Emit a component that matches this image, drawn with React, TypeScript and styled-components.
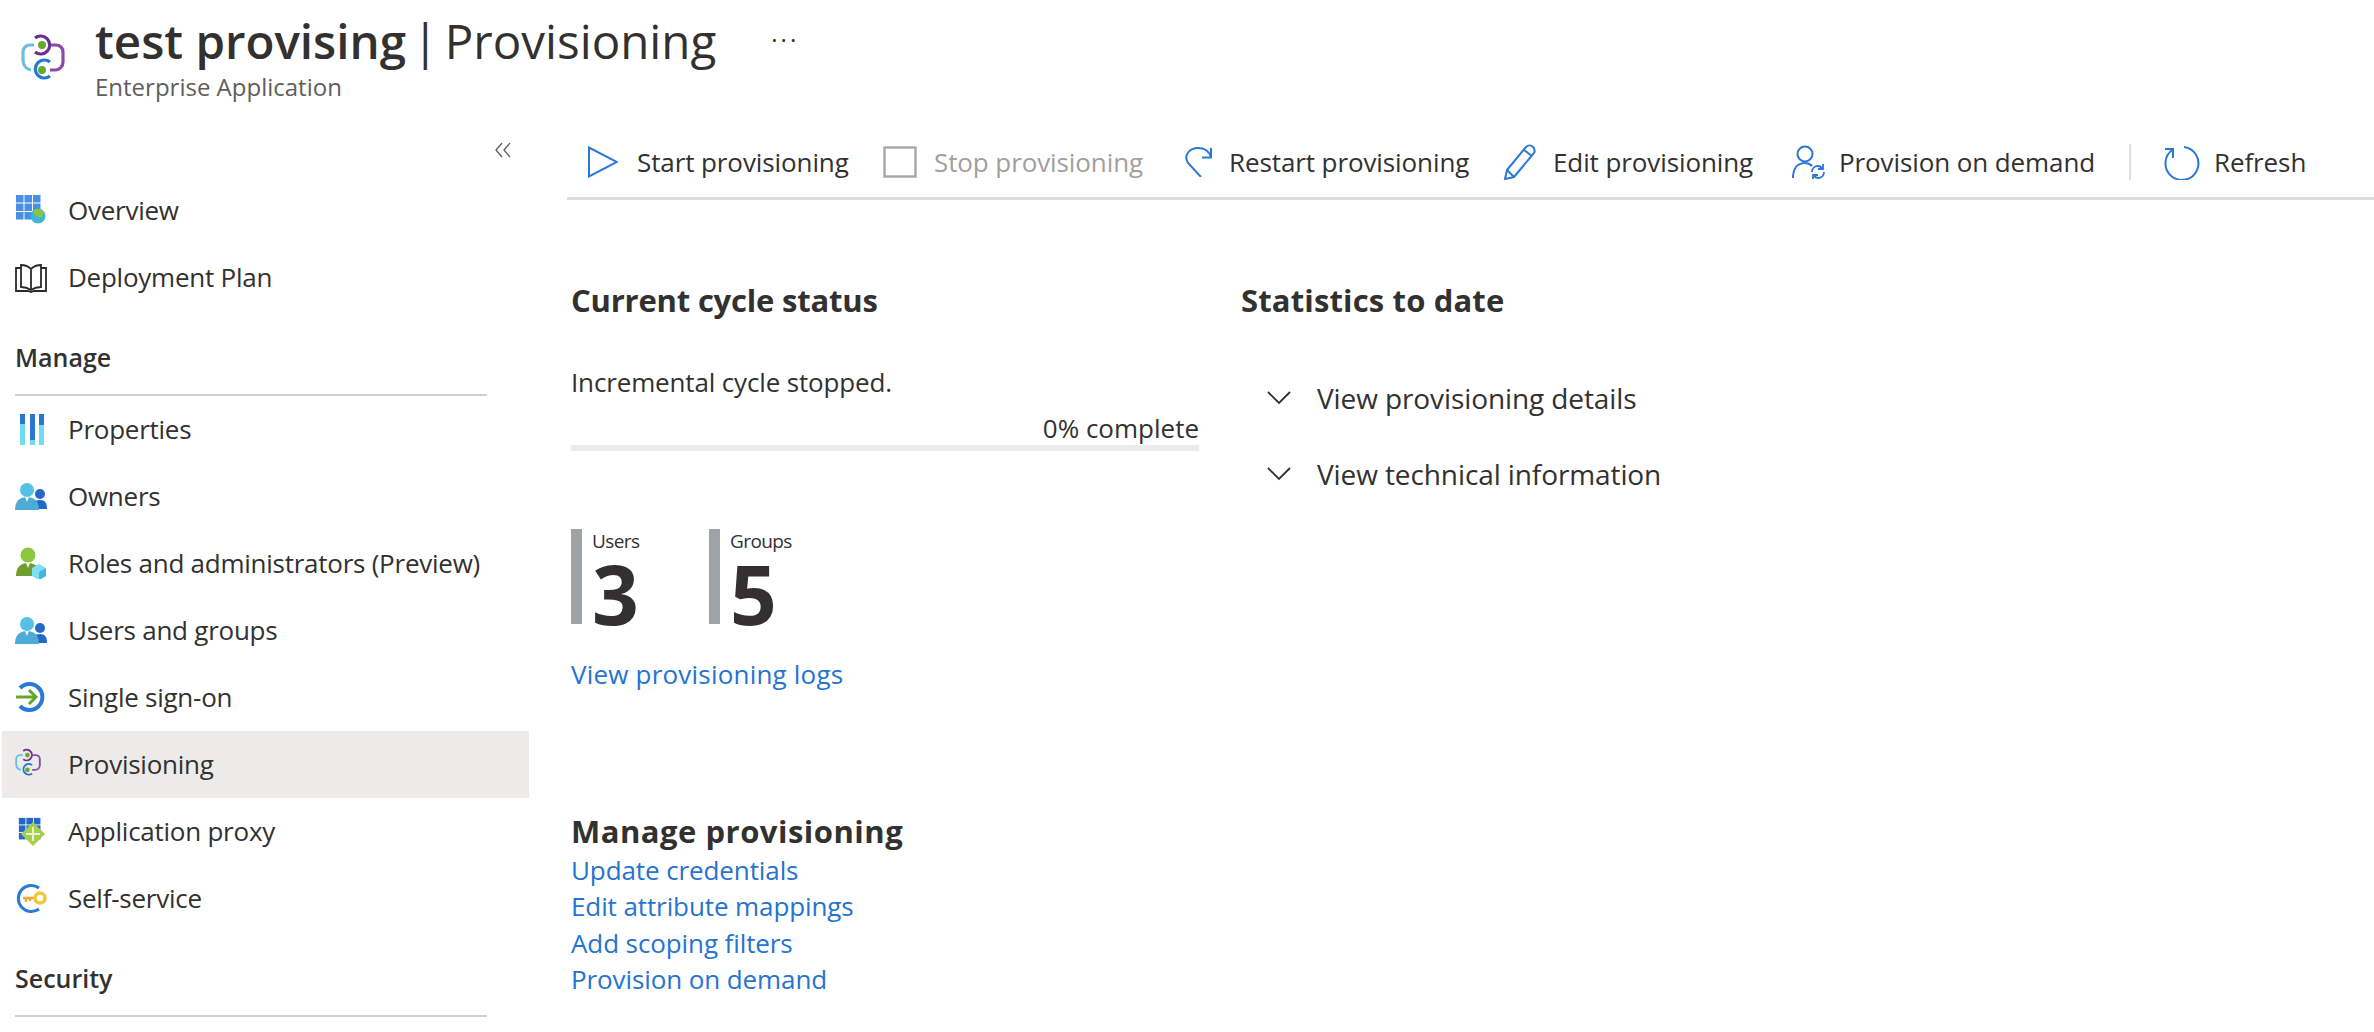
import React from "react";
import styled, { createGlobalStyle } from "styled-components";

const GlobalStyle = createGlobalStyle`
  html, body {
    margin: 0;
    padding: 0;
    background: #fff;
    overflow: hidden;
  }
  body {
    font-family: "Open Sans", "Noto Sans", "Liberation Sans", sans-serif;
    color: #323130;
  }
`;

const Page = styled.div`
  width: 2374px;
  height: 1032px;
  overflow: hidden;
  display: flex;
  flex-direction: column;
`;

const Header = styled.header`
  display: flex;
  height: 130px;
  flex: none;
  padding-left: 21px;
`;

const LogoSlot = styled.div`
  width: 74px;
  padding-top: 33px;
  flex: none;
`;

const TitleBlock = styled.div`
  padding-top: 9px;
`;

const Title = styled.h1`
  margin: 0;
  font-size: 47.5px;
  line-height: 64px;
  font-weight: 400;
  white-space: nowrap;
  word-spacing: -6px;
  > b {
    font-weight: 600;
    word-spacing: 0;
  }
`;

const SubTitle = styled.div`
  font-size: 24px;
  line-height: 32px;
  margin-top: -2px;
  color: #605e5c;
`;

const MoreDots = styled.div`
  margin: 28px 0 0 55px;
  font-size: 24px;
  line-height: 24px;
  letter-spacing: 3px;
`;

const Body = styled.div`
  display: flex;
  flex: 1;
  min-height: 0;
`;

const Sidebar = styled.nav`
  width: 527px;
  margin-left: 2px;
  flex: none;
`;

const CollapseRow = styled.div`
  height: 47px;
  display: flex;
  justify-content: flex-end;
  padding-right: 18px;
  box-sizing: border-box;
  padding-top: 12px;
`;

const NavRow = styled.div<{ $active?: boolean }>`
  height: 67px;
  box-sizing: border-box;
  display: flex;
  align-items: center;
  padding: 0 0 2px 13px;
  gap: 21px;
  font-size: 26px;
  letter-spacing: -0.25px;
  background: ${(p) => (p.$active ? "#edebe9" : "transparent")};
`;

const NavIcon = styled.span`
  width: 32px;
  height: 32px;
  flex: none;
  display: flex;
`;

const SectionTitle = styled.div`
  margin: 0 42px 0 13px;
  height: 85px;
  box-sizing: border-box;
  display: flex;
  align-items: flex-end;
  padding-bottom: 20px;
  font-size: 25px;
  font-weight: 600;
  border-bottom: 2px solid #cfcfcf;
`;

const Main = styled.main`
  flex: 1;
  margin-left: 38px;
  min-width: 0;
`;

const Toolbar = styled.div`
  height: 70px;
  box-sizing: border-box;
  display: flex;
  align-items: center;
  padding: 0 0 4px 19px;
  border-bottom: 3px solid #dcdcdc;
`;

const ToolItem = styled.div<{ $width: number; $muted?: boolean }>`
  width: ${(p) => p.$width}px;
  flex: none;
  display: flex;
  align-items: center;
  font-size: 26px;
  letter-spacing: -0.1px;
  white-space: nowrap;
  color: ${(p) => (p.$muted ? "#a19f9d" : "#323130")};
`;

const ToolIcon = styled.span<{ $slot: number }>`
  width: ${(p) => p.$slot}px;
  flex: none;
  display: flex;
`;

const ToolSeparator = styled.div`
  width: 2px;
  height: 36px;
  margin-right: 33px;
  background: #dedede;
  flex: none;
`;

const Columns = styled.div`
  display: flex;
  padding-left: 4px;
`;

const StatusColumn = styled.section`
  width: 628px;
  margin-right: 42px;
  flex: none;
`;

const Heading = styled.h2`
  margin: 0;
  font-size: 31px;
  line-height: 40px;
  font-weight: 700;
  letter-spacing: -0.2px;
  padding-top: 80px;
`;

const StatsHeading = styled(Heading)`
  letter-spacing: 0.15px;
`;

const BodyText = styled.div`
  margin-top: 44px;
  font-size: 26px;
  line-height: 36px;
  letter-spacing: -0.15px;
`;

const ProgressLabel = styled.div`
  margin-top: 12px;
  text-align: right;
  font-size: 26px;
  line-height: 32px;
`;

const ProgressTrack = styled.div`
  height: 6px;
  margin-top: 1px;
  background: #edebe9;
`;

const Counters = styled.div`
  display: flex;
  margin-top: 78px;
`;

const Counter = styled.div`
  width: 138px;
  height: 95px;
  box-sizing: border-box;
  border-left: 11px solid #a0a3a6;
  padding-left: 10px;
  flex: none;
`;

const CounterLabel = styled.div`
  font-size: 19px;
  line-height: 24px;
  letter-spacing: -0.6px;
`;

const CounterValue = styled.div`
  font-size: 82px;
  line-height: 76px;
  font-weight: 700;
  margin-top: 2px;
  letter-spacing: -2px;
`;

const TextLink = styled.a`
  display: block;
  font-size: 26px;
  line-height: 36.6px;
  letter-spacing: -0.1px;
  color: #2673d0;
`;

const LogsLink = styled(TextLink)`
  margin-top: 32px;
  letter-spacing: 0.2px;
`;

const ManageHeading = styled.h2`
  margin: 118px 0 0;
  font-size: 31px;
  line-height: 40px;
  font-weight: 700;
  letter-spacing: 0.5px;
`;

const LinkList = styled.div`
  margin-top: 1px;
`;

const StatsColumn = styled.section`
  flex: 1;
`;

const Expander = styled.div`
  display: flex;
  align-items: center;
  height: 76px;
  padding-left: 26px;
  gap: 26px;
  font-size: 28px;
  letter-spacing: -0.1px;
`;

const ExpanderList = styled.div`
  margin-top: 40px;
`;

const blue = "#2b78d6";

const Stroke = ({ size, children, w = 2, h }: any) => (
  <svg width={size} height={h ?? size} viewBox={`0 0 ${size} ${h ?? size}`} fill="none" stroke={blue} strokeWidth={w}>
    {children}
  </svg>
);

const PlayIcon = () => (
  <Stroke size={32}>
    <path d="M3 1.500v29L31 16z" />
  </Stroke>
);

const StopIcon = () => (
  <svg width="34" height="32" viewBox="0 0 34 32" fill="none" stroke="#a6a6a6" strokeWidth="2.400">
    <rect x="1.500" y="1.500" width="31" height="29" />
  </svg>
);

const RestartIcon = () => (
  <Stroke size={30}>
    <path d="M17 30 4 16C-1 8 6 1 14 1c6 0 11 3 13 9" />
    <path d="M27 1v9.500h-9" />
  </Stroke>
);

const EditIcon = () => (
  <Stroke size={36}>
    <path d="M6 26 25 3c2-2 5-2 7 0s2 4 1 6L13 33l-9 2z" />
    <path d="m6 26 7 7M23 6l8 6" />
  </Stroke>
);

const DemandIcon = () => (
  <Stroke size={34}>
    <circle cx="13" cy="9" r="7.500" />
    <path d="M1 33c0-9 4-15 12-15 3 0 5 1 7 3" />
    <path d="M20 27c0-4 3-6 6-6 2 0 3 1 4 2M32 27c0 4-3 6-6 6-2 0-3-1-4-2" strokeWidth="1.800" />
    <path d="M31 19v5h-5M21 35v-5h5" strokeWidth="1.800" />
  </Stroke>
);

const RefreshIcon = () => (
  <Stroke size={36}>
    <path d="M9 5.500a16.500 16.500 0 1 0 11-2.500" />
    <path d="M9 14V5H1" />
  </Stroke>
);

const AppLogo = ({ size = 44 }: { size?: number }) => (
  <svg width={size} height={(size * 48) / 44} viewBox="0 0 44 48" fill="none" strokeWidth="3.200">
    <path d="M14 5a9 9 0 1 1 0 14" stroke="#6b2e91" />
    <path d="M30 12h5c4 0 7 3 7 7v10c0 4-3 8-8 8h-5" stroke="#8a4aa8" />
    <path d="M13 12H9c-4 0-7 3-7 7v8c0 5 3 9 8 10" stroke="#6ebde4" />
    <path d="M29 29a9 9 0 1 0 0 14" stroke="#2378cf" />
    <circle cx="21" cy="12" r="4" fill="#67a92f" />
    <circle cx="21" cy="37" r="4" fill="#67a92f" />
  </svg>
);

const Grid = ({ color }: { color: string }) => (
  <g fill={color}>
    {[0, 1, 2].map((r) =>
      [0, 1, 2].map((c) => (
        <rect key={`${r}${c}`} x={1 + c * 8.5} y={1 + r * 8.5} width="7.500" height="7.500" />
      )),
    )}
  </g>
);

const OverviewIcon = () => (
  <svg width="32" height="32" viewBox="0 0 32 32">
    <Grid color="#4a90e2" />
    <circle cx="23" cy="22" r="7.500" fill="#3fb4d8" />
    <path d="M19 16c4-2 8-1 10 3l-3 5-4-2-3-2z" fill="#8cc63f" />
  </svg>
);

const BookIcon = () => (
  <svg width="32" height="32" viewBox="0 0 32 32" fill="none" stroke="#2b2b2b" strokeWidth="1.800">
    <path d="M16 8C13 5 9 4 6 4v22c4 0 7 1 10 3 3-2 6-3 10-3V4c-3 0-7 1-10 4zM16 8v21" />
    <path d="M6 7H1v23h12l3 1 3-1h12V7h-5" />
  </svg>
);

const PropertiesIcon = () => (
  <svg width="32" height="32" viewBox="0 0 32 32">
    <path d="M5 1h5v32H5zM15 1h5v32h-5zM24 1h5v32h-5z" fill="#6fdcf5" />
    <path d="M5 1h5v10H5zM15 1h5v26h-5zM24 1h5v11h-5z" fill="#2a77d1" />
  </svg>
);

const PeopleIcon = () => (
  <svg width="32" height="32" viewBox="0 0 32 30">
    <circle cx="25" cy="13" r="5" fill="#2468c9" />
    <path d="M16 28c0-6 4-9 9-9s7 3 7 9z" fill="#2468c9" />
    <circle cx="12" cy="9" r="7" fill="#55c1e6" />
    <path d="M0 29c0-8 4-13 12-13s12 5 12 13z" fill="#4eaad6" />
    <path d="m10 16 2 5 2-5z" fill="#fff" />
  </svg>
);

const RolesIcon = () => (
  <svg width="32" height="32" viewBox="0 0 32 32">
    <circle cx="13" cy="8" r="7.500" fill="#8cc63f" />
    <path d="M1 29c0-8 4-13 12-13s12 5 12 13z" fill="#6e9e2d" />
    <path d="m11 16 2 5 2-5z" fill="#fff" />
    <path d="m24 17 7 4v8l-7 4-7-4v-8z" fill="#7fe0f5" />
    <path d="m24 25 7-4v8l-7 4z" fill="#43b6e2" />
  </svg>
);

const SsoIcon = () => (
  <svg width="32" height="32" viewBox="0 0 32 32" fill="none">
    <path d="M5 7a13 13 0 1 1 0 18" stroke="#2b78d6" strokeWidth="4" />
    <path d="M1 16h19M14 9l7 7-7 7" stroke="#62a72d" strokeWidth="3" />
  </svg>
);

const ProxyIcon = () => (
  <svg width="32" height="32" viewBox="0 0 32 32">
    <g transform="translate(3 2) scale(.88)">
      <Grid color="#2468c9" />
    </g>
    <path d="M18 7l12 12-12 12L6 19z" fill="#a4cf4e" />
    <path d="M18 12v14M11 19h14" stroke="#e8f3cf" strokeWidth="2" />
  </svg>
);

const SelfServiceIcon = () => (
  <svg width="32" height="32" viewBox="0 0 32 32" fill="none">
    <path d="M24 6a13 13 0 1 0 0 21" stroke="#2b78d6" strokeWidth="3" />
    <path d="M8 16h13M11 16v4M15 16v3" stroke="#f2a93b" strokeWidth="2.500" />
    <circle cx="25" cy="16" r="5" stroke="#f5c437" strokeWidth="3.500" />
  </svg>
);

const CollapseIcon = () => (
  <svg width="16" height="16" viewBox="0 0 16 16" fill="none" stroke="#605e5c" strokeWidth="1.300">
    <path d="M7 1 1 8l6 7M15 1 9 8l6 7" />
  </svg>
);

const Chevron = () => (
  <svg width="24" height="14" viewBox="0 0 24 14" fill="none" stroke="#323130" strokeWidth="1.800">
    <path d="m1 1 11 11L23 1" />
  </svg>
);

const navTop = [
  { label: "Overview", icon: <OverviewIcon /> },
  { label: "Deployment Plan", icon: <BookIcon /> },
];

const navManage = [
  { label: "Properties", icon: <PropertiesIcon /> },
  { label: "Owners", icon: <PeopleIcon /> },
  { label: "Roles and administrators (Preview)", icon: <RolesIcon /> },
  { label: "Users and groups", icon: <PeopleIcon /> },
  { label: "Single sign-on", icon: <SsoIcon /> },
  { label: "Provisioning", icon: <AppLogo size={26} />, active: true },
  { label: "Application proxy", icon: <ProxyIcon /> },
  { label: "Self-service", icon: <SelfServiceIcon /> },
];

const NavItem = ({ item }: any) => (
  <NavRow $active={item.active}>
    <NavIcon>{item.icon}</NavIcon>
    {item.label}
  </NavRow>
);

export default function App() {
  return (
    <Page>
      <GlobalStyle />
      <Header>
        <LogoSlot>
          <AppLogo />
        </LogoSlot>
        <TitleBlock>
          <Title>
            <b>test provising</b> | Provisioning
          </Title>
          <SubTitle>Enterprise Application</SubTitle>
        </TitleBlock>
        <MoreDots>···</MoreDots>
      </Header>
      <Body>
        <Sidebar>
          <CollapseRow>
            <CollapseIcon />
          </CollapseRow>
          {navTop.map((item) => (
            <NavItem key={item.label} item={item} />
          ))}
          <SectionTitle>Manage</SectionTitle>
          {navManage.map((item) => (
            <NavItem key={item.label} item={item} />
          ))}
          <SectionTitle>Security</SectionTitle>
        </Sidebar>
        <Main>
          <Toolbar>
            <ToolItem $width={297}>
              <ToolIcon $slot={51}><PlayIcon /></ToolIcon>Start provisioning
            </ToolItem>
            <ToolItem $width={301} $muted>
              <ToolIcon $slot={51}><StopIcon /></ToolIcon>Stop provisioning
            </ToolItem>
            <ToolItem $width={317}>
              <ToolIcon $slot={45}><RestartIcon /></ToolIcon>Restart provisioning
            </ToolItem>
            <ToolItem $width={291}>
              <ToolIcon $slot={52}><EditIcon /></ToolIcon>Edit provisioning
            </ToolItem>
            <ToolItem $width={337}>
              <ToolIcon $slot={47}><DemandIcon /></ToolIcon>Provision on demand
            </ToolItem>
            <ToolSeparator />
            <ToolItem $width={140}>
              <ToolIcon $slot={50}><RefreshIcon /></ToolIcon>Refresh
            </ToolItem>
          </Toolbar>
          <Columns>
            <StatusColumn>
              <Heading>Current cycle status</Heading>
              <BodyText>Incremental cycle stopped.</BodyText>
              <ProgressLabel>0% complete</ProgressLabel>
              <ProgressTrack />
              <Counters>
                <Counter>
                  <CounterLabel>Users</CounterLabel>
                  <CounterValue>3</CounterValue>
                </Counter>
                <Counter>
                  <CounterLabel>Groups</CounterLabel>
                  <CounterValue>5</CounterValue>
                </Counter>
              </Counters>
              <LogsLink>View provisioning logs</LogsLink>
              <ManageHeading>Manage provisioning</ManageHeading>
              <LinkList>
                <TextLink>Update credentials</TextLink>
                <TextLink>Edit attribute mappings</TextLink>
                <TextLink>Add scoping filters</TextLink>
                <TextLink>Provision on demand</TextLink>
              </LinkList>
            </StatusColumn>
            <StatsColumn>
              <StatsHeading>Statistics to date</StatsHeading>
              <ExpanderList>
                <Expander><Chevron />View provisioning details</Expander>
                <Expander><Chevron />View technical information</Expander>
              </ExpanderList>
            </StatsColumn>
          </Columns>
        </Main>
      </Body>
    </Page>
  );
}
